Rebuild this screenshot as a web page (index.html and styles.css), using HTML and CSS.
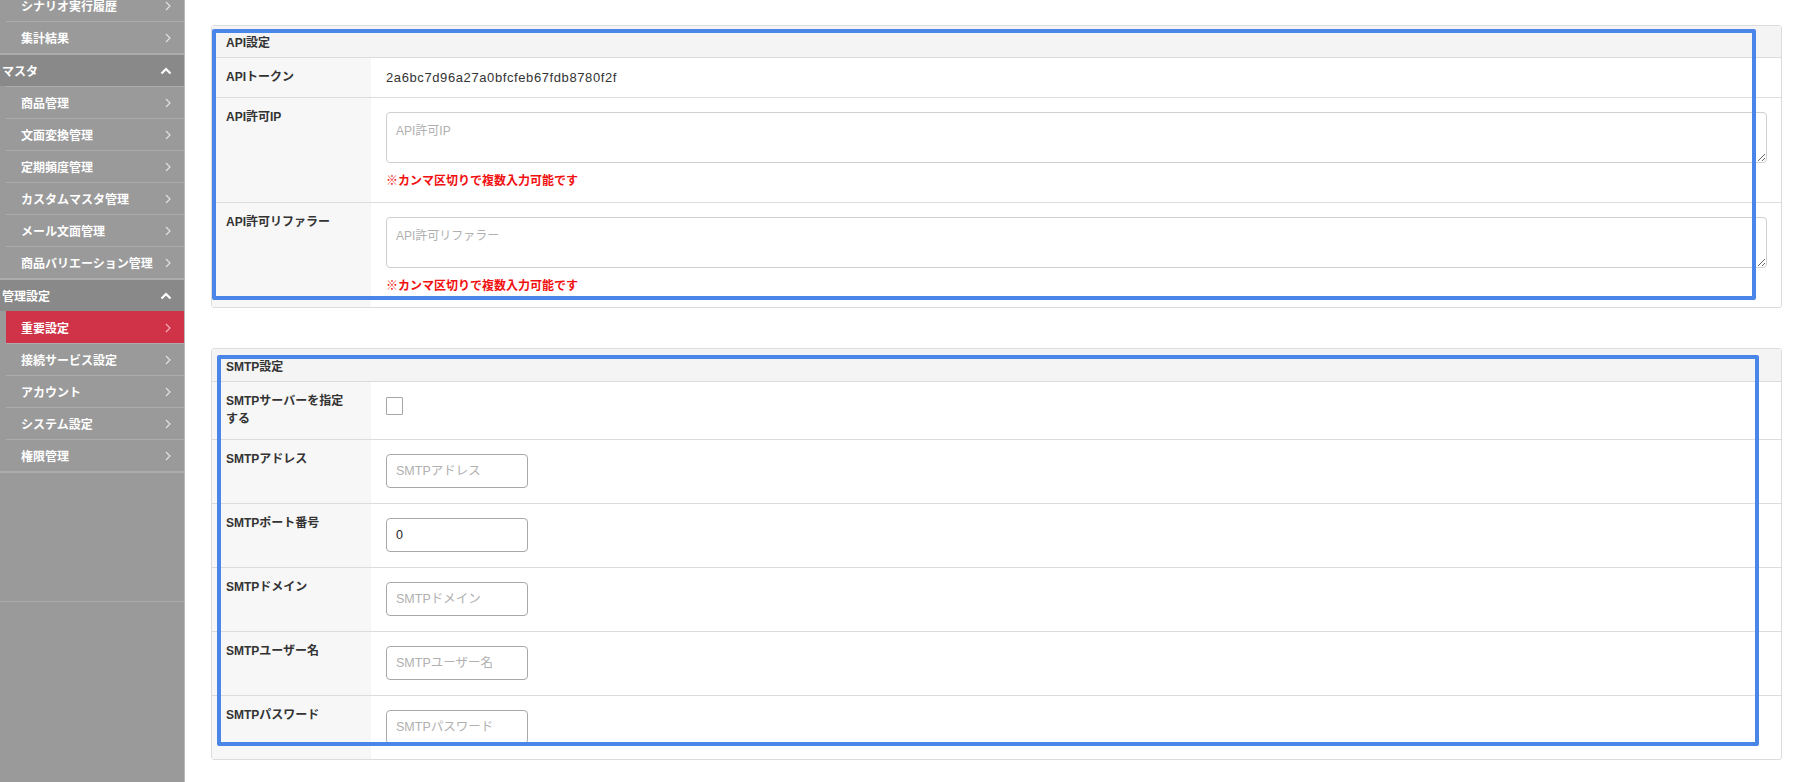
FILE: index.html
```html
<!DOCTYPE html>
<html lang="ja">
<head>
<meta charset="utf-8">
<title>重要設定</title>
<link rel="stylesheet" href="styles.css">
</head>
<body>
<div class="layout">
  <aside class="sidebar">
    <nav class="nav">
      <div class="group">
        <a class="item"><span>シナリオ実行履歴</span><svg class="chev" viewBox="0 0 6 10"><polyline points="1,1 5,5 1,9"/></svg></a>
        <a class="item"><span>集計結果</span><svg class="chev" viewBox="0 0 6 10"><polyline points="1,1 5,5 1,9"/></svg></a>
      </div>
      <div class="group">
        <div class="group-head"><span>マスタ</span><svg class="up" viewBox="0 0 12 8"><polyline points="1.5,6.5 6,2 10.5,6.5"/></svg></div>
        <a class="item"><span>商品管理</span><svg class="chev" viewBox="0 0 6 10"><polyline points="1,1 5,5 1,9"/></svg></a>
        <a class="item"><span>文面変換管理</span><svg class="chev" viewBox="0 0 6 10"><polyline points="1,1 5,5 1,9"/></svg></a>
        <a class="item"><span>定期頻度管理</span><svg class="chev" viewBox="0 0 6 10"><polyline points="1,1 5,5 1,9"/></svg></a>
        <a class="item"><span>カスタムマスタ管理</span><svg class="chev" viewBox="0 0 6 10"><polyline points="1,1 5,5 1,9"/></svg></a>
        <a class="item"><span>メール文面管理</span><svg class="chev" viewBox="0 0 6 10"><polyline points="1,1 5,5 1,9"/></svg></a>
        <a class="item"><span>商品バリエーション管理</span><svg class="chev" viewBox="0 0 6 10"><polyline points="1,1 5,5 1,9"/></svg></a>
      </div>
      <div class="group">
        <div class="group-head"><span>管理設定</span><svg class="up" viewBox="0 0 12 8"><polyline points="1.5,6.5 6,2 10.5,6.5"/></svg></div>
        <a class="item active"><span>重要設定</span><svg class="chev" viewBox="0 0 6 10"><polyline points="1,1 5,5 1,9"/></svg></a>
        <a class="item"><span>接続サービス設定</span><svg class="chev" viewBox="0 0 6 10"><polyline points="1,1 5,5 1,9"/></svg></a>
        <a class="item"><span>アカウント</span><svg class="chev" viewBox="0 0 6 10"><polyline points="1,1 5,5 1,9"/></svg></a>
        <a class="item"><span>システム設定</span><svg class="chev" viewBox="0 0 6 10"><polyline points="1,1 5,5 1,9"/></svg></a>
        <a class="item"><span>権限管理</span><svg class="chev" viewBox="0 0 6 10"><polyline points="1,1 5,5 1,9"/></svg></a>
      </div>
      <div class="nav-end"></div>
    </nav>
  </aside>

  <main class="main">
    <section class="card">
      <div class="card-head">API設定</div>
      <div class="row">
        <div class="label">APIトークン</div>
        <div class="value value-text">2a6bc7d96a27a0bfcfeb67fdb8780f2f</div>
      </div>
      <div class="row">
        <div class="label">API許可IP</div>
        <div class="value">
          <textarea class="textarea" placeholder="API許可IP"></textarea>
          <p class="note">※カンマ区切りで複数入力可能です</p>
        </div>
      </div>
      <div class="row">
        <div class="label">API許可リファラー</div>
        <div class="value">
          <textarea class="textarea" placeholder="API許可リファラー"></textarea>
          <p class="note">※カンマ区切りで複数入力可能です</p>
        </div>
      </div>
      <div class="highlight highlight-api"></div>
    </section>

    <section class="card">
      <div class="card-head card-head-tall">SMTP設定</div>
      <div class="row">
        <div class="label">SMTPサーバーを指定<span class="nowrap">する</span></div>
        <div class="value"><input type="checkbox" class="checkbox"></div>
      </div>
      <div class="row">
        <div class="label">SMTPアドレス</div>
        <div class="value"><input type="text" class="input" placeholder="SMTPアドレス"></div>
      </div>
      <div class="row">
        <div class="label">SMTPポート番号</div>
        <div class="value"><input type="text" class="input" value="0"></div>
      </div>
      <div class="row">
        <div class="label">SMTPドメイン</div>
        <div class="value"><input type="text" class="input" placeholder="SMTPドメイン"></div>
      </div>
      <div class="row">
        <div class="label">SMTPユーザー名</div>
        <div class="value"><input type="text" class="input" placeholder="SMTPユーザー名"></div>
      </div>
      <div class="row">
        <div class="label">SMTPパスワード</div>
        <div class="value"><input type="password" class="input" placeholder="SMTPパスワード"></div>
      </div>
      <div class="highlight highlight-smtp"></div>
    </section>
  </main>
</div>
</body>
</html>
```

FILE: styles.css
```css
* { box-sizing: border-box; }

html, body {
  margin: 0;
  padding: 0;
}

body {
  width: 1798px;
  height: 782px;
  overflow: hidden;
  background: #fff;
  color: #333;
  font-family: "Liberation Sans", "Noto Sans CJK JP", sans-serif;
}

.layout {
  display: flex;
  height: 782px;
}

/* ---------- sidebar ---------- */
.sidebar {
  width: 185px;
  flex: none;
  background: #9a9a9a;
  border-right: 1px solid #b8b8b8;
  overflow: hidden;
}

.nav {
  margin-top: -11px;
}

.group {
  border-bottom: 2px solid #acacac;
}

.group-head {
  height: 31px;
  display: flex;
  align-items: center;
  justify-content: space-between;
  padding: 0 12px 0 2px;
  background: #898989;
  color: #fff;
  font-size: 12px;
  font-weight: bold;
}

.item {
  display: flex;
  align-items: center;
  justify-content: space-between;
  height: 32px;
  margin-left: 6px;
  padding: 0 13px 0 15px;
  border-top: 1px solid #acacac;
  color: #fff;
  font-size: 12px;
  font-weight: bold;
  text-decoration: none;
}

.item.active {
  background: #d03347;
  border-top-color: #d03347;
}

.chev {
  width: 6px;
  height: 10px;
  fill: none;
  stroke: #e4e4e4;
  stroke-width: 1.1;
}

.item.active .chev {
  stroke: #f4b3ba;
}

.up {
  width: 12px;
  height: 8px;
  fill: none;
  stroke: #fff;
  stroke-width: 2.2;
}

.nav-end {
  height: 129px;
  border-bottom: 1px solid #adadad;
}

/* ---------- main ---------- */
.main {
  flex: 1;
  padding: 25px 16px 0 26px;
}

.card {
  position: relative;
  border: 1px solid #dcdcdc;
  border-radius: 3px;
  margin-bottom: 40px;
}

.card-head {
  height: 32px;
  display: flex;
  align-items: center;
  padding-left: 14px;
  background: #f4f4f4;
  border-bottom: 1px solid #dcdcdc;
  font-size: 12px;
  font-weight: bold;
}

.card-head-tall {
  height: 33px;
}

.row {
  display: flex;
}

.row + .row {
  border-top: 1px solid #dcdcdc;
}

.label {
  width: 159px;
  flex: none;
  padding: 10px 14px 11px;
  background: #f7f7f7;
  font-size: 12px;
  font-weight: bold;
  line-height: 18px;
}

.nowrap {
  white-space: nowrap;
}

.value {
  flex: 1;
  padding: 14px 14px 15px 15px;
  font-size: 13px;
  line-height: 18px;
}

.value-text {
  padding-top: 11px;
  padding-bottom: 10px;
  letter-spacing: 0.6px;
}

.textarea {
  display: block;
  width: 100%;
  height: 51px;
  margin: 0;
  padding: 8px 9px;
  border: 1px solid #cfcfcf;
  border-radius: 4px;
  font-family: "Liberation Sans", "Noto Sans CJK JP", sans-serif;
  font-size: 12px;
  color: #333;
  resize: vertical;
}

.note {
  margin: 8px 0 0;
  color: #f01010;
  font-size: 12px;
  font-weight: bold;
  line-height: 20px;
}

.row .value:has(.note) {
  padding-bottom: 11px;
}

.input {
  display: block;
  width: 142px;
  height: 34px;
  margin: 0;
  padding: 0 9px;
  border: 1px solid #a9a9a9;
  border-radius: 4px;
  font-family: "Liberation Sans", "Noto Sans CJK JP", sans-serif;
  font-size: 12.5px;
  color: #222;
}

.input::placeholder,
.textarea::placeholder {
  color: #b0b0b0;
}

.checkbox {
  appearance: none;
  -webkit-appearance: none;
  display: block;
  width: 17px;
  height: 18px;
  margin: 1px 0 0;
  border: 1px solid #a5a5a5;
  border-radius: 1px;
  background: #fff;
}

/* annotation overlays */
.highlight {
  position: absolute;
  border: 4px solid #4a86e8;
  border-radius: 2px;
  pointer-events: none;
}

.highlight-api {
  left: 0;
  top: 3px;
  width: 1544px;
  height: 271px;
}

.highlight-smtp {
  left: 5px;
  top: 6px;
  width: 1542px;
  height: 391px;
}
```
